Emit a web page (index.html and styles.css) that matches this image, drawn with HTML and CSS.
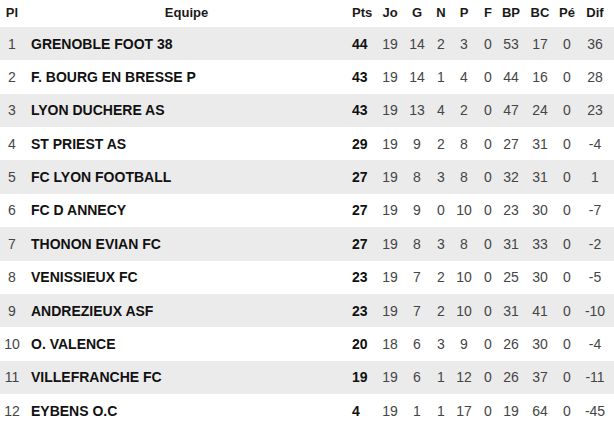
FILE: index.html
```html
<!DOCTYPE html>
<html lang="fr">
<head>
<meta charset="utf-8">
<title>Classement</title>
<link rel="stylesheet" href="styles.css">
</head>
<body>
<table class="standings">
  <colgroup>
    <col class="c-pl"><col class="c-team"><col class="c-pts"><col class="c-jo"><col class="c-g"><col class="c-n"><col class="c-p"><col class="c-f"><col class="c-bp"><col class="c-bc"><col class="c-pe"><col class="c-dif">
  </colgroup>
  <thead>
    <tr><th>Pl</th><th>Equipe</th><th class="pts">Pts</th><th>Jo</th><th>G</th><th>N</th><th>P</th><th>F</th><th>BP</th><th>BC</th><th>Pé</th><th>Dif</th></tr>
  </thead>
  <tbody>
    <tr><td>1</td><td class="team">GRENOBLE FOOT 38</td><td class="pts">44</td><td>19</td><td>14</td><td>2</td><td>3</td><td>0</td><td>53</td><td>17</td><td>0</td><td>36</td></tr>
    <tr><td>2</td><td class="team">F. BOURG EN BRESSE P</td><td class="pts">43</td><td>19</td><td>14</td><td>1</td><td>4</td><td>0</td><td>44</td><td>16</td><td>0</td><td>28</td></tr>
    <tr><td>3</td><td class="team">LYON DUCHERE AS</td><td class="pts">43</td><td>19</td><td>13</td><td>4</td><td>2</td><td>0</td><td>47</td><td>24</td><td>0</td><td>23</td></tr>
    <tr><td>4</td><td class="team">ST PRIEST AS</td><td class="pts">29</td><td>19</td><td>9</td><td>2</td><td>8</td><td>0</td><td>27</td><td>31</td><td>0</td><td>-4</td></tr>
    <tr><td>5</td><td class="team">FC LYON FOOTBALL</td><td class="pts">27</td><td>19</td><td>8</td><td>3</td><td>8</td><td>0</td><td>32</td><td>31</td><td>0</td><td>1</td></tr>
    <tr><td>6</td><td class="team">FC D ANNECY</td><td class="pts">27</td><td>19</td><td>9</td><td>0</td><td>10</td><td>0</td><td>23</td><td>30</td><td>0</td><td>-7</td></tr>
    <tr><td>7</td><td class="team">THONON EVIAN FC</td><td class="pts">27</td><td>19</td><td>8</td><td>3</td><td>8</td><td>0</td><td>31</td><td>33</td><td>0</td><td>-2</td></tr>
    <tr><td>8</td><td class="team">VENISSIEUX FC</td><td class="pts">23</td><td>19</td><td>7</td><td>2</td><td>10</td><td>0</td><td>25</td><td>30</td><td>0</td><td>-5</td></tr>
    <tr><td>9</td><td class="team">ANDREZIEUX ASF</td><td class="pts">23</td><td>19</td><td>7</td><td>2</td><td>10</td><td>0</td><td>31</td><td>41</td><td>0</td><td>-10</td></tr>
    <tr><td>10</td><td class="team">O. VALENCE</td><td class="pts">20</td><td>18</td><td>6</td><td>3</td><td>9</td><td>0</td><td>26</td><td>30</td><td>0</td><td>-4</td></tr>
    <tr><td>11</td><td class="team">VILLEFRANCHE FC</td><td class="pts">19</td><td>19</td><td>6</td><td>1</td><td>12</td><td>0</td><td>26</td><td>37</td><td>0</td><td>-11</td></tr>
    <tr><td>12</td><td class="team">EYBENS O.C</td><td class="pts">4</td><td>19</td><td>1</td><td>1</td><td>17</td><td>0</td><td>19</td><td>64</td><td>0</td><td>-45</td></tr>
  </tbody>
</table>
</body>
</html>
```

FILE: styles.css
```css
html, body {
  margin: 0;
  padding: 0;
  background: #ffffff;
}

.standings {
  width: 614px;
  border-collapse: collapse;
  table-layout: fixed;
  font-family: "Liberation Sans", Arial, sans-serif;
}

.c-pl { width: 24px; }
.c-team { width: 325px; }
.c-pts { width: 27px; }
.c-jo { width: 28px; }
.c-g { width: 26px; }
.c-n { width: 22px; }
.c-p { width: 24px; }
.c-f { width: 24px; }
.c-bp { width: 22px; }
.c-bc { width: 36px; }
.c-pe { width: 18px; }
.c-dif { width: 38px; }

.standings th {
  height: 27px;
  padding: 0 0 3px 0;
  font-size: 13px;
  font-weight: bold;
  color: #1a1a1a;
  text-align: center;
  vertical-align: middle;
  white-space: nowrap;
  box-sizing: border-box;
}

.standings td {
  height: 33.36px;
  padding: 0;
  font-size: 14px;
  color: #454545;
  text-align: center;
  vertical-align: middle;
  white-space: nowrap;
  box-sizing: border-box;
}

.standings tbody tr:nth-child(odd) {
  background: #ebebeb;
}

.standings td.team {
  text-align: left;
  padding-left: 7px;
  font-weight: bold;
  color: #111111;
}

.standings .pts {
  text-align: left;
  padding-left: 3px;
}

.standings td.pts {
  font-weight: bold;
  color: #111111;
}
```
